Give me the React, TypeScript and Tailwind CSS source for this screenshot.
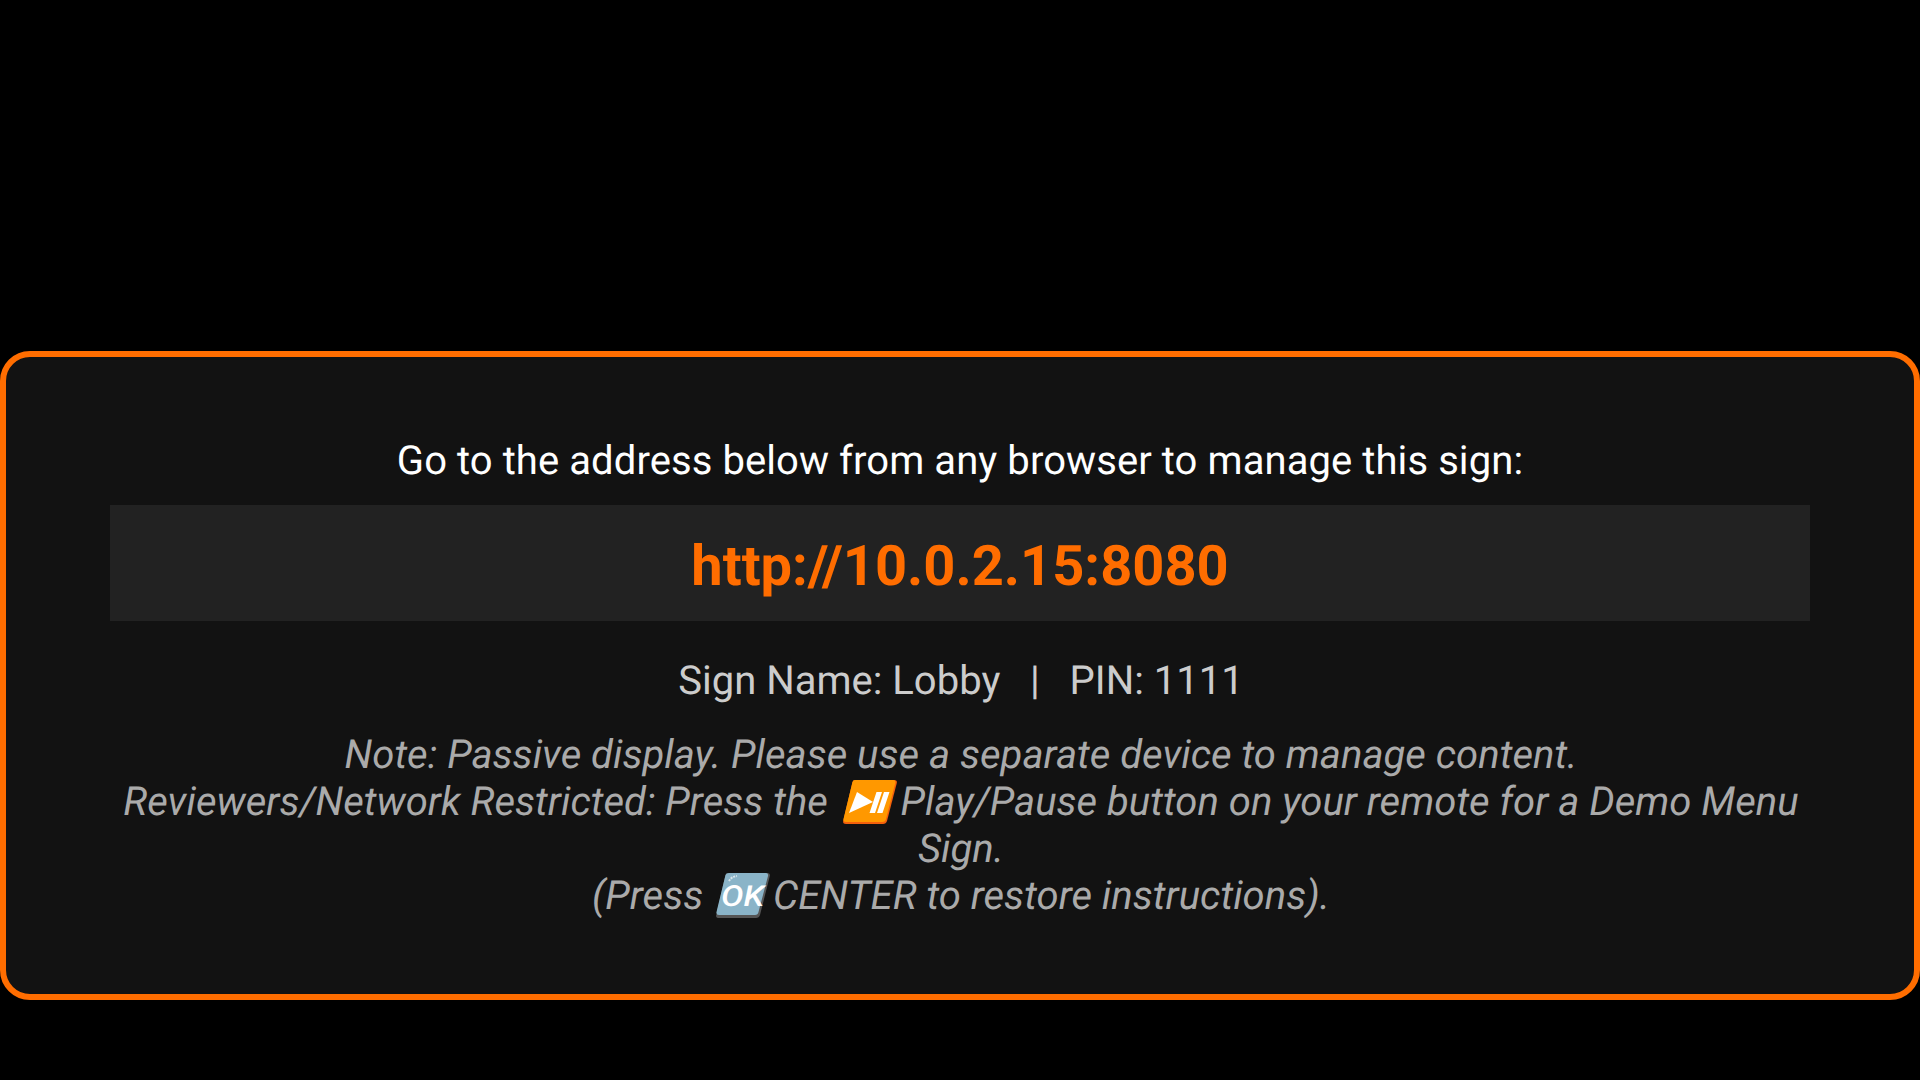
import React from 'react';

const PlayPauseKey = () => (
  <svg viewBox="-2 0 53 44" className="inline-block w-[53px] h-[44px] overflow-visible align-[-9px]">
    <path d="M15 0 L54 0 Q57.500 0 56.800 3 L47 41 Q46 44 43 44 L6 44 Q2.500 44 3.200 41 L12.500 2 Q13 0 15 0 Z" fill="#f4600c" />
    <path d="M15 0 L53 0 Q56 0 55.300 3 L46 39 Q45.500 42 42 42 L6 42 Q2.800 42 3.500 39 L12.500 2 Q13 0 15 0 Z" fill="#ff9800" />
    <path d="M17 12 L33 22 L9 33 Z" fill="#ffffff" />
    <path d="M36.500 12 L42 12 L35 33 L29.500 33 Z M44 12 L49.500 12 L42.500 33 L37 33 Z" fill="#ffffff" />
  </svg>
);

const OkKey = () => (
  <svg viewBox="0 0 50 45" className="inline-block w-[50px] h-[45px] overflow-visible align-[-9px]">
    <path d="M16 0 L54 0 Q57.500 0 56.800 3 L47 42 Q46 45 43 45 L6 45 Q2.500 45 3.200 42 L12.500 2 Q13 0 16 0 Z" fill="#555555" />
    <path d="M16 0 L53 0 Q55.500 0 55 3 L45.500 39 Q45 42 42 42 L6 42 Q3 42 3.500 39 L12.500 2 Q13 0 16 0 Z" fill="#8ab4c8" />
    <path d="M16 8 Q18 4 24 3" fill="none" stroke="#d9e6ec" strokeWidth="2" strokeDasharray="2 1" />
    <text x="8" y="33" fontFamily="Roboto, sans-serif" fontSize="29" fontStyle="italic" fontWeight="500" fill="#ffffff" textLength="43" lengthAdjust="spacingAndGlyphs">OK</text>
  </svg>
);

const App: React.FC = () => {
  return (
    <div className="w-[1920px] h-[1080px] bg-black flex flex-col justify-end pb-[80px] font-['Roboto',sans-serif] [text-rendering:geometricPrecision]">
      <div className="h-[649px] bg-[#121212] border-[6px] border-[#ff6d00] rounded-[30px] pt-[80px] px-[104px] text-center">
        <p className="text-[40px] leading-[47px] tracking-[0.08px] text-white">Go to the address below from any browser to manage this sign:</p>
        <div className="mt-[21px] h-[116px] bg-[#222222] flex items-center justify-center pt-[5px]">
          <span className="text-[56px] leading-[66px] font-bold text-[#ff6d00]">http://10.0.2.15:8080</span>
        </div>
        <p className="mt-[36px] pl-[2px] text-[40px] leading-[47px] text-[#cccccc] whitespace-pre">Sign Name: Lobby   |   PIN: 1111</p>
        <p className="mt-[27px] pl-[2px] text-[40px] leading-[47px] tracking-[0.02px] italic text-[#aaaaaa]">
          Note: Passive display. Please use a separate device to manage content.<br />
          Reviewers/Network Restricted: Press the <PlayPauseKey /> Play/Pause button on your remote for a Demo Menu Sign.<br />
          (Press <OkKey /> CENTER to restore instructions).
        </p>
      </div>
    </div>
  );
};

export default App;
